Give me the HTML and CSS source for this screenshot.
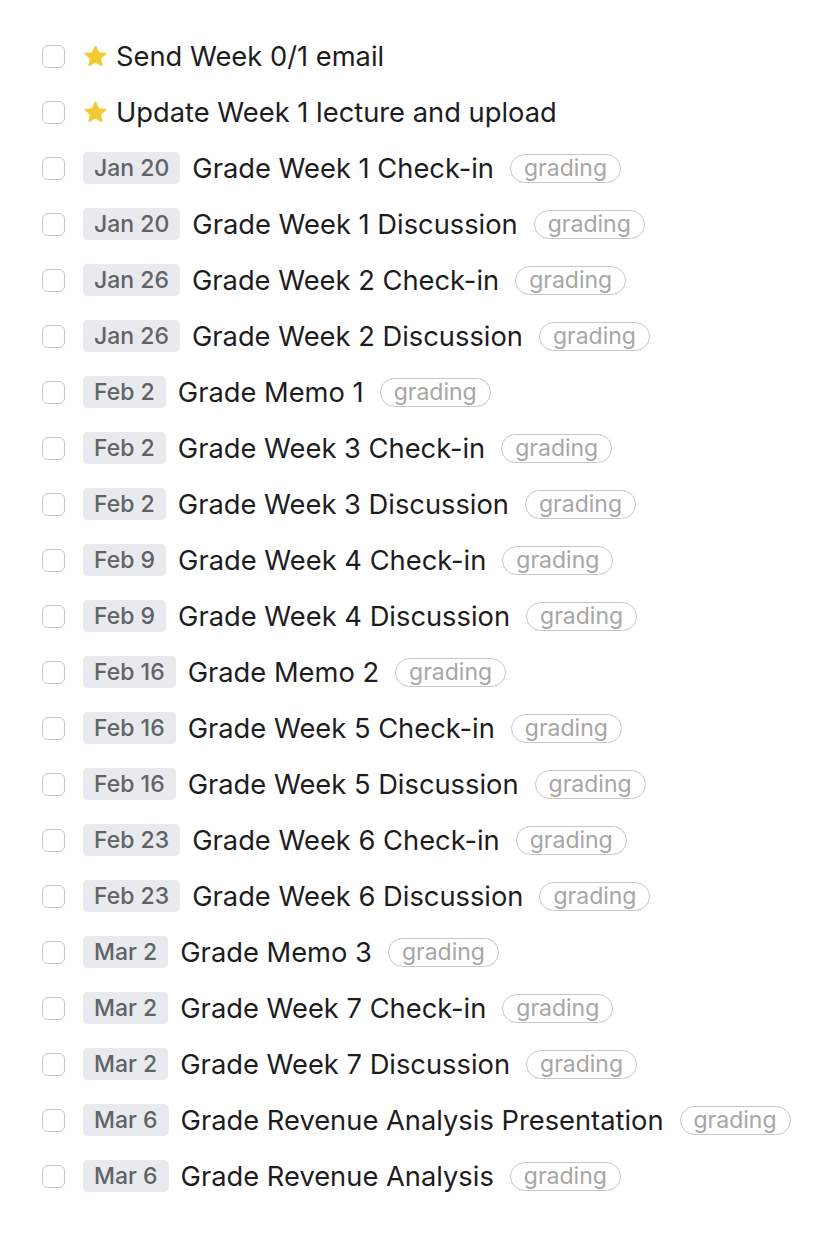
FILE: index.html
```html
<!DOCTYPE html>
<html lang="en">
<head>
  <meta charset="UTF-8" />
  <title>Tasks</title>
  <link rel="stylesheet" href="styles.css">
</head>
<body>
  <ul class="tasks">
    <li class="task"><span class="box"></span><svg class="star" viewBox="0 0 24 24"><path d="M12 2.2l2.9 6.3 6.9.7-5.2 4.6 1.5 6.8L12 17.1l-6.1 3.5 1.5-6.8-5.2-4.6 6.9-.7z"/></svg><span class="title">Send Week 0/1 email</span></li>
    <li class="task"><span class="box"></span><svg class="star" viewBox="0 0 24 24"><path d="M12 2.2l2.9 6.3 6.9.7-5.2 4.6 1.5 6.8L12 17.1l-6.1 3.5 1.5-6.8-5.2-4.6 6.9-.7z"/></svg><span class="title">Update Week 1 lecture and upload</span></li>
    <li class="task"><span class="box"></span><span class="date">Jan 20</span><span class="title">Grade Week 1 Check-in</span><span class="tag">grading</span></li>
    <li class="task"><span class="box"></span><span class="date">Jan 20</span><span class="title">Grade Week 1 Discussion</span><span class="tag">grading</span></li>
    <li class="task"><span class="box"></span><span class="date">Jan 26</span><span class="title">Grade Week 2 Check-in</span><span class="tag">grading</span></li>
    <li class="task"><span class="box"></span><span class="date">Jan 26</span><span class="title">Grade Week 2 Discussion</span><span class="tag">grading</span></li>
    <li class="task"><span class="box"></span><span class="date">Feb 2</span><span class="title">Grade Memo 1</span><span class="tag">grading</span></li>
    <li class="task"><span class="box"></span><span class="date">Feb 2</span><span class="title">Grade Week 3 Check-in</span><span class="tag">grading</span></li>
    <li class="task"><span class="box"></span><span class="date">Feb 2</span><span class="title">Grade Week 3 Discussion</span><span class="tag">grading</span></li>
    <li class="task"><span class="box"></span><span class="date">Feb 9</span><span class="title">Grade Week 4 Check-in</span><span class="tag">grading</span></li>
    <li class="task"><span class="box"></span><span class="date">Feb 9</span><span class="title">Grade Week 4 Discussion</span><span class="tag">grading</span></li>
    <li class="task"><span class="box"></span><span class="date">Feb 16</span><span class="title">Grade Memo 2</span><span class="tag">grading</span></li>
    <li class="task"><span class="box"></span><span class="date">Feb 16</span><span class="title">Grade Week 5 Check-in</span><span class="tag">grading</span></li>
    <li class="task"><span class="box"></span><span class="date">Feb 16</span><span class="title">Grade Week 5 Discussion</span><span class="tag">grading</span></li>
    <li class="task"><span class="box"></span><span class="date">Feb 23</span><span class="title">Grade Week 6 Check-in</span><span class="tag">grading</span></li>
    <li class="task"><span class="box"></span><span class="date">Feb 23</span><span class="title">Grade Week 6 Discussion</span><span class="tag">grading</span></li>
    <li class="task"><span class="box"></span><span class="date">Mar 2</span><span class="title">Grade Memo 3</span><span class="tag">grading</span></li>
    <li class="task"><span class="box"></span><span class="date">Mar 2</span><span class="title">Grade Week 7 Check-in</span><span class="tag">grading</span></li>
    <li class="task"><span class="box"></span><span class="date">Mar 2</span><span class="title">Grade Week 7 Discussion</span><span class="tag">grading</span></li>
    <li class="task"><span class="box"></span><span class="date">Mar 6</span><span class="title">Grade Revenue Analysis Presentation</span><span class="tag">grading</span></li>
    <li class="task"><span class="box"></span><span class="date">Mar 6</span><span class="title">Grade Revenue Analysis</span><span class="tag">grading</span></li>
  </ul>
</body>
</html>
```

FILE: styles.css
```css
body {
  margin: 0;
  font-family: Inter, "Noto Sans", sans-serif;
  background-color: #ffffff;
  color: #1d1d1f;
}

.tasks {
  list-style: none;
  margin: 0;
  padding: 28px 0 0 42px;
}

.task {
  display: flex;
  align-items: center;
  height: 56px;
}

.box {
  width: 21px;
  height: 21px;
  border: 1.5px solid #c6c6c6;
  border-radius: 6px;
  flex: none;
  margin-right: 18px;
}

.star {
  width: 25px;
  height: 25px;
  fill: #f5c932;
  stroke: #f5c932;
  stroke-width: 1.4;
  stroke-linejoin: round;
  margin-right: 8px;
}

.date {
  background-color: #e8eaed;
  color: #5f6368;
  font-size: 23px;
  font-weight: 500;
  line-height: 32px;
  padding: 0 11px;
  border-radius: 5px;
  margin-right: 12px;
}

.title {
  font-size: 27.3px;
}

.tag {
  margin-left: 16px;
  border: 1.5px solid #c6c6c6;
  border-radius: 16px;
  color: #a6a6a6;
  font-size: 23px;
  line-height: 27px;
  padding: 0 13px;
}
```
